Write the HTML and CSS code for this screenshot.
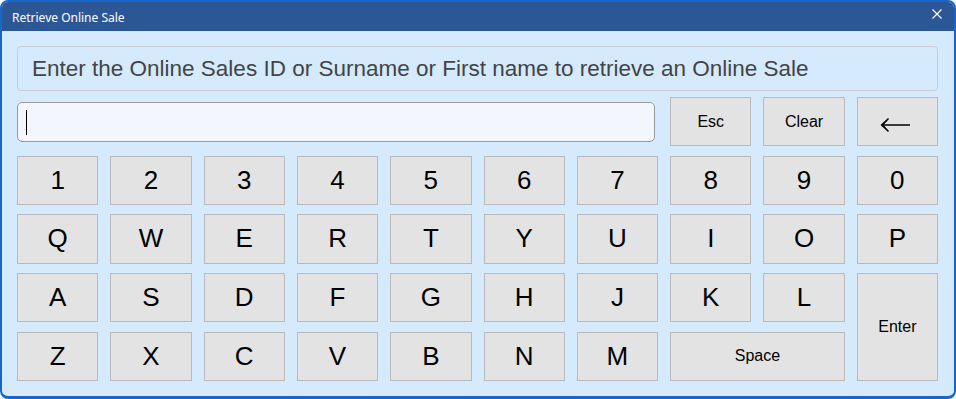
FILE: index.html
```html
<!DOCTYPE html>
<html lang="en">
<head>
    <meta charset="UTF-8">
    <title>Retrieve Online Sale</title>
    <link rel="stylesheet" href="styles.css">
</head>
<body>
    <div class="window">
        <div class="titlebar">
            <span class="title">Retrieve Online Sale</span>
            <svg class="close" width="10" height="10" viewBox="0 0 10 10">
                <path d="M0.5 0.5 L9.5 9.5 M9.5 0.5 L0.5 9.5" stroke="#fff" stroke-width="1.2"/>
            </svg>
        </div>
        <div class="content">
            <div class="prompt">Enter the Online Sales ID or Surname or First name to retrieve an Online Sale</div>
            <div class="keypad">
                <div class="entry"><span class="caret"></span></div>
                <div class="key small">Esc</div>
                <div class="key small">Clear</div>
                <div class="key">
                    <svg width="32" height="18" viewBox="0 0 32 18">
                        <path d="M3 9 H31" stroke="#000" stroke-width="1.3"/>
                        <path d="M9 2 L1.5 9 L9 16 L10 15 L4.5 9 L10 3 Z" fill="#000"/>
                    </svg>
                </div>

                <div class="key">1</div>
                <div class="key">2</div>
                <div class="key">3</div>
                <div class="key">4</div>
                <div class="key">5</div>
                <div class="key">6</div>
                <div class="key">7</div>
                <div class="key">8</div>
                <div class="key">9</div>
                <div class="key">0</div>

                <div class="key">Q</div>
                <div class="key">W</div>
                <div class="key">E</div>
                <div class="key">R</div>
                <div class="key">T</div>
                <div class="key">Y</div>
                <div class="key">U</div>
                <div class="key">I</div>
                <div class="key">O</div>
                <div class="key">P</div>

                <div class="key">A</div>
                <div class="key">S</div>
                <div class="key">D</div>
                <div class="key">F</div>
                <div class="key">G</div>
                <div class="key">H</div>
                <div class="key">J</div>
                <div class="key">K</div>
                <div class="key">L</div>
                <div class="key small enter">Enter</div>

                <div class="key">Z</div>
                <div class="key">X</div>
                <div class="key">C</div>
                <div class="key">V</div>
                <div class="key">B</div>
                <div class="key">N</div>
                <div class="key">M</div>
                <div class="key small space">Space</div>
            </div>
        </div>
    </div>
</body>
</html>
```

FILE: styles.css
```css
body {
    margin: 0;
    font-family: "Liberation Sans", Arial, sans-serif;
    background-color: #ffffff;
}
.window {
    box-sizing: border-box;
    width: 956px;
    height: 399px;
    border: 2px solid #1766cc;
    border-bottom-width: 3px;
    border-radius: 8px;
    background-color: #d5eafd;
    overflow: hidden;
}
.titlebar {
    height: 29px;
    background-color: #2b5797;
    color: #ffffff;
    display: flex;
    align-items: center;
    justify-content: space-between;
    padding: 0 12px 0 10px;
    font-family: "Noto Sans", "Open Sans", sans-serif;
    font-size: 12px;
}
.title {
    margin-top: 1px;
}
.close {
    margin-top: -6px;
}
.content {
    padding: 15px 16px 0 15px;
}
.prompt {
    box-sizing: border-box;
    height: 45px;
    border: 1px solid #c6ccd2;
    border-radius: 4px;
    padding-left: 14px;
    display: flex;
    align-items: center;
    font-size: 22.5px;
    color: #444444;
}
.keypad {
    margin-top: 6px;
    height: 284px;
    display: grid;
    grid-template-columns: repeat(10, 1fr);
    grid-template-rows: repeat(5, 1fr);
    gap: 9.5px 12px;
}
.entry {
    grid-column: 1 / 8;
    margin: 5px 3px 4px 0;
    border: 1px solid #9a9a9a;
    border-radius: 5px;
    background-color: #f4f6fe;
    display: flex;
    align-items: center;
    padding-left: 8px;
}
.caret {
    width: 1px;
    height: 25px;
    background-color: #000000;
}
.key {
    box-sizing: border-box;
    border: 1px solid #b9b9b9;
    background-color: #e3e3e3;
    display: flex;
    align-items: center;
    justify-content: center;
    font-size: 26px;
    color: #000000;
}
.key.small {
    font-size: 16px;
}
.key svg {
    margin-top: 6px;
    margin-left: -4px;
}
.enter {
    grid-column: 10;
    grid-row: 4 / 6;
}
.space {
    grid-column: 8 / 10;
}
```
